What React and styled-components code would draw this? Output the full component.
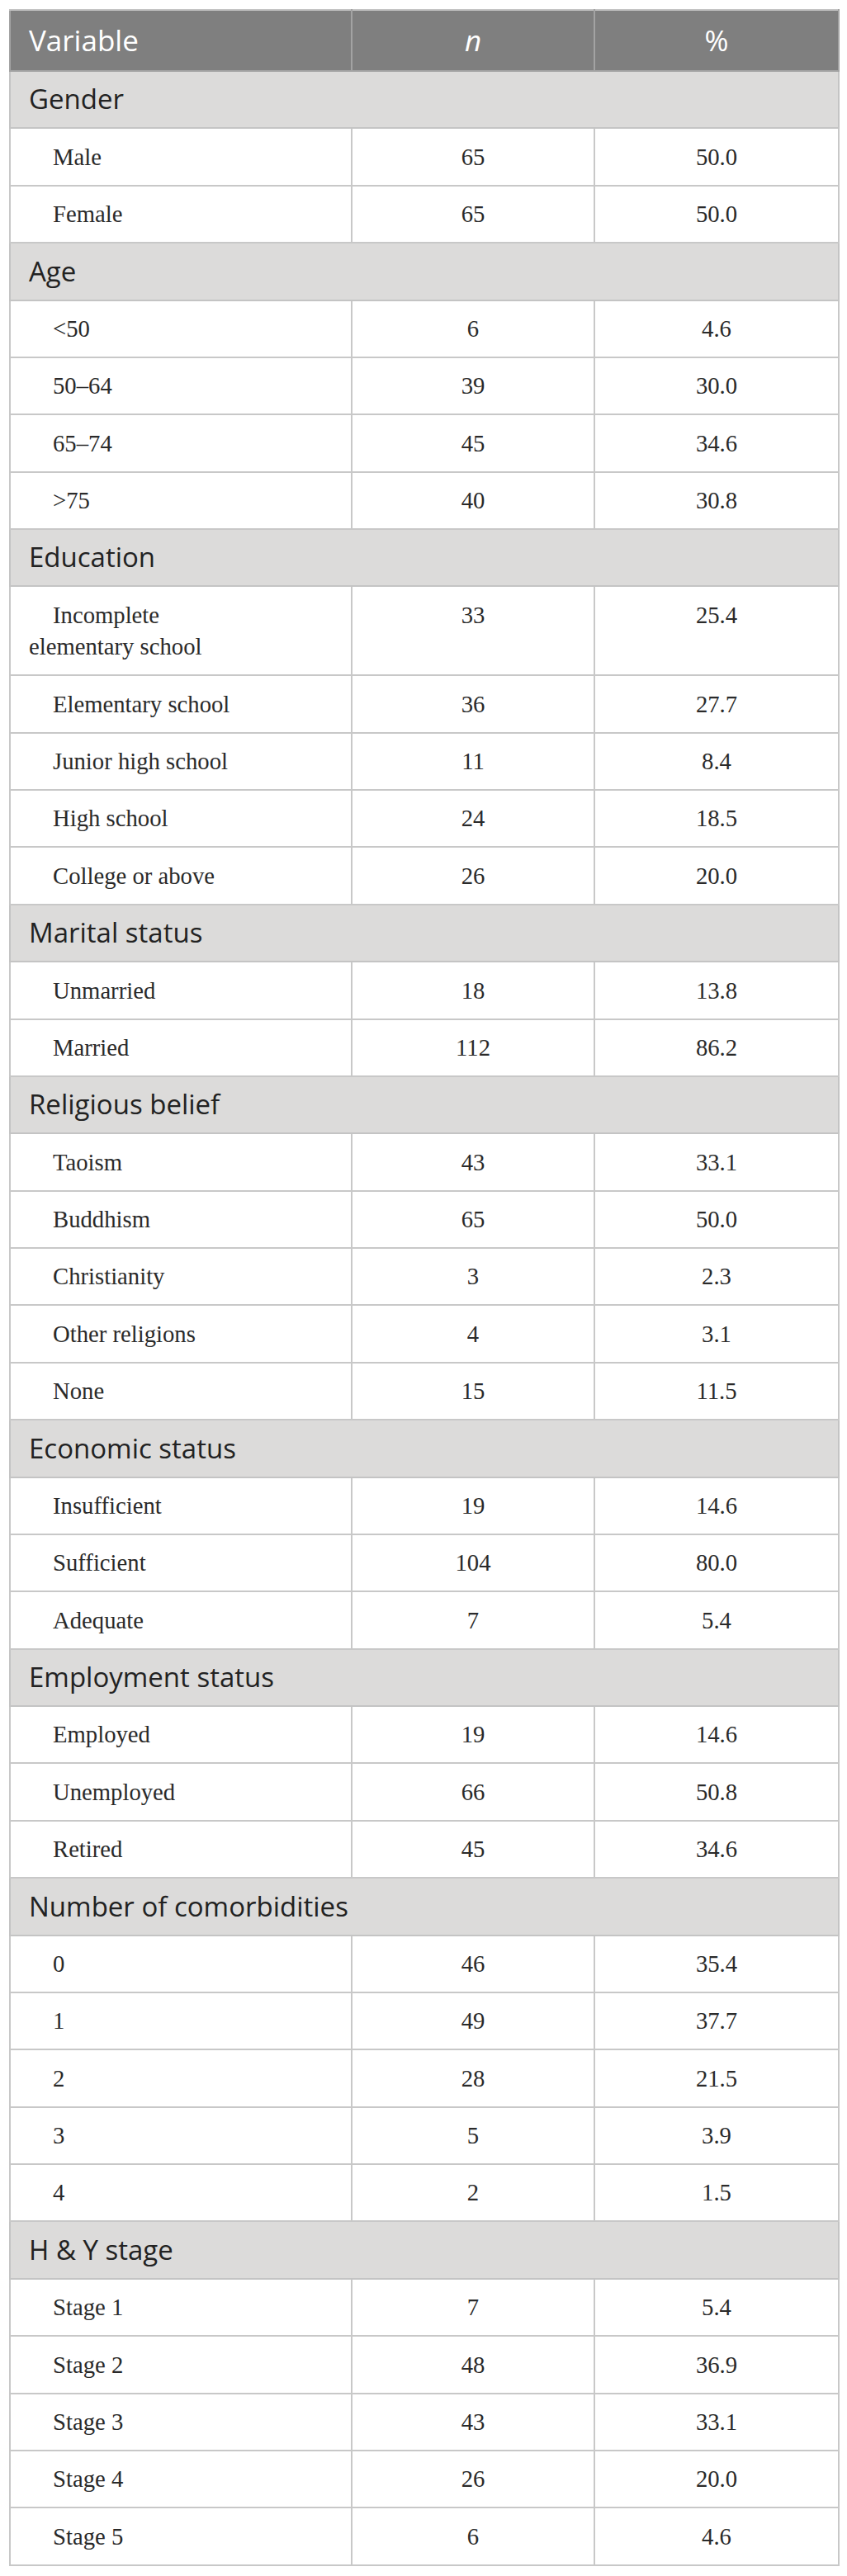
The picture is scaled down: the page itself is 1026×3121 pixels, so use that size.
import React from "react";
import styled, { createGlobalStyle } from "styled-components";

const GlobalStyle = createGlobalStyle`
  html, body {
    margin: 0;
    padding: 0;
    background: #ffffff;
  }
`;

const Page = styled.div`
  padding: 11px;
`;

const Table = styled.table`
  width: 1004px;
  border-collapse: collapse;
  table-layout: fixed;
  border: 2px solid #c4c4c4;
`;

const HeadCell = styled.th`
  background: #7f7f7f;
  color: #ffffff;
  font-family: "Open Sans", "Noto Sans", sans-serif;
  font-size: 35px;
  font-weight: 400;
  font-style: ${(props) => (props.italic ? "italic" : "normal")};
  line-height: 38.5px;
  padding: 16.75px 22px;
  text-align: ${(props) => (props.center ? "center" : "left")};
  border: 2px solid #a3a3a3;
  border-top-color: #c4c4c4;
`;

const SectionCell = styled.td`
  background: #dcdbda;
  color: #222222;
  font-family: "Open Sans", "Noto Sans", sans-serif;
  font-size: 33px;
  line-height: 38.5px;
  padding: 14.45px 22px;
  border: 2px solid #c4c4c4;
`;

const LabelCell = styled.td`
  font-family: "Liberation Serif", "Times New Roman", serif;
  font-size: 28.7px;
  line-height: 38.5px;
  color: #2a2a2a;
  padding: 14.45px 110px 14.45px 22px;
  text-indent: 29px;
  border: 2px solid #c8c8c8;
  vertical-align: top;
`;

const ValueCell = styled(LabelCell)`
  text-align: center;
  text-indent: 0;
  padding: 14.45px 22px;
`;

const sections = [
  {
    title: "Gender",
    rows: [
      ["Male", "65", "50.0"],
      ["Female", "65", "50.0"],
    ],
  },
  {
    title: "Age",
    rows: [
      ["<50", "6", "4.6"],
      ["50–64", "39", "30.0"],
      ["65–74", "45", "34.6"],
      [">75", "40", "30.8"],
    ],
  },
  {
    title: "Education",
    rows: [
      ["Incomplete elementary school", "33", "25.4"],
      ["Elementary school", "36", "27.7"],
      ["Junior high school", "11", "8.4"],
      ["High school", "24", "18.5"],
      ["College or above", "26", "20.0"],
    ],
  },
  {
    title: "Marital status",
    rows: [
      ["Unmarried", "18", "13.8"],
      ["Married", "112", "86.2"],
    ],
  },
  {
    title: "Religious belief",
    rows: [
      ["Taoism", "43", "33.1"],
      ["Buddhism", "65", "50.0"],
      ["Christianity", "3", "2.3"],
      ["Other religions", "4", "3.1"],
      ["None", "15", "11.5"],
    ],
  },
  {
    title: "Economic status",
    rows: [
      ["Insufficient", "19", "14.6"],
      ["Sufficient", "104", "80.0"],
      ["Adequate", "7", "5.4"],
    ],
  },
  {
    title: "Employment status",
    rows: [
      ["Employed", "19", "14.6"],
      ["Unemployed", "66", "50.8"],
      ["Retired", "45", "34.6"],
    ],
  },
  {
    title: "Number of comorbidities",
    rows: [
      ["0", "46", "35.4"],
      ["1", "49", "37.7"],
      ["2", "28", "21.5"],
      ["3", "5", "3.9"],
      ["4", "2", "1.5"],
    ],
  },
  {
    title: "H & Y stage",
    rows: [
      ["Stage 1", "7", "5.4"],
      ["Stage 2", "48", "36.9"],
      ["Stage 3", "43", "33.1"],
      ["Stage 4", "26", "20.0"],
      ["Stage 5", "6", "4.6"],
    ],
  },
];

const App = () => {
  return (
    <Page>
      <GlobalStyle />
      <Table>
        <colgroup>
          <col style={{ width: "414px" }} />
          <col style={{ width: "294px" }} />
          <col style={{ width: "296px" }} />
        </colgroup>
        <thead>
          <tr>
            <HeadCell>Variable</HeadCell>
            <HeadCell center italic>
              n
            </HeadCell>
            <HeadCell center>%</HeadCell>
          </tr>
        </thead>
        <tbody>
          {sections.map((section) => (
            <React.Fragment key={section.title}>
              <tr>
                <SectionCell colSpan={3}>{section.title}</SectionCell>
              </tr>
              {section.rows.map(([label, n, pct]) => (
                <tr key={label}>
                  <LabelCell>{label}</LabelCell>
                  <ValueCell>{n}</ValueCell>
                  <ValueCell>{pct}</ValueCell>
                </tr>
              ))}
            </React.Fragment>
          ))}
        </tbody>
      </Table>
    </Page>
  );
};

export default App;
